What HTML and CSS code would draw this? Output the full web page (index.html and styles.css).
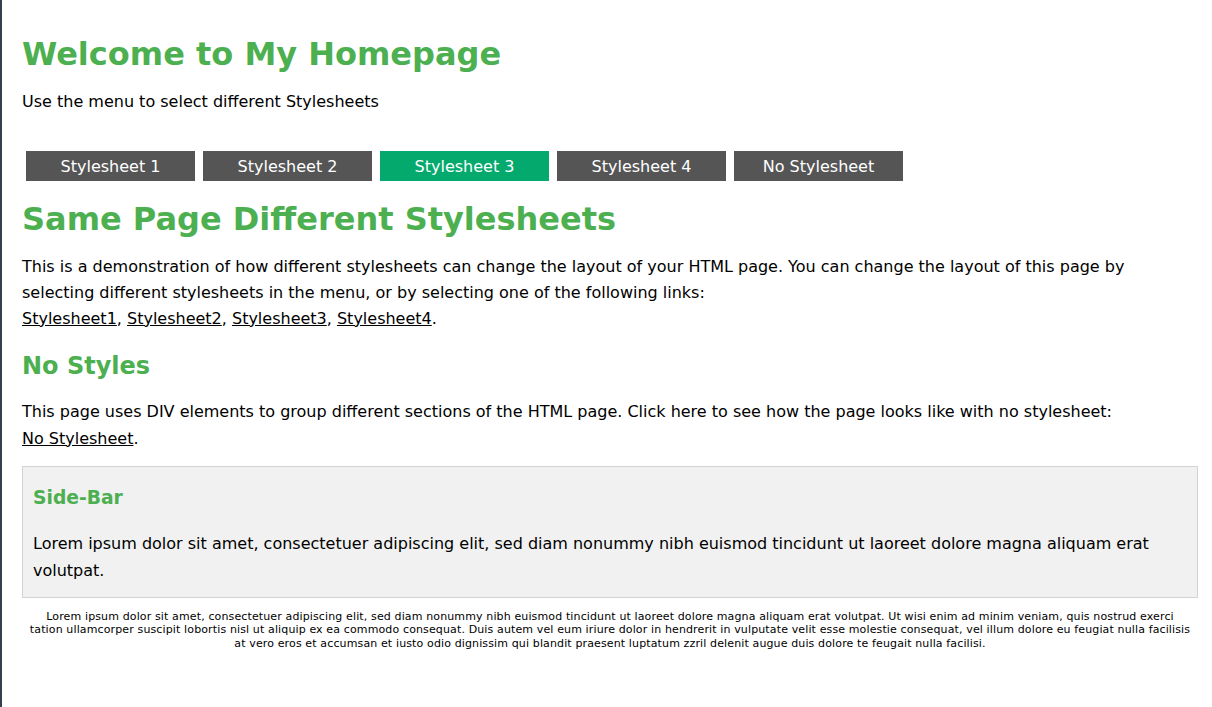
FILE: index.html
```html
<!DOCTYPE html>
<html lang="en">
<head>
<meta charset="utf-8">
<title>My Homepage</title>
<link rel="stylesheet" href="styles.css">
</head>
<body>
<div class="page">
  <div class="intro">
    <h1 class="title">Welcome to My Homepage</h1>
    <p class="lead">Use the menu to select different Stylesheets</p>
  </div>
  <nav class="menu">
    <a class="menu-item" href="#">Stylesheet 1</a>
    <a class="menu-item" href="#">Stylesheet 2</a>
    <a class="menu-item active" href="#">Stylesheet 3</a>
    <a class="menu-item" href="#">Stylesheet 4</a>
    <a class="menu-item" href="#">No Stylesheet</a>
  </nav>
  <div class="content">
    <h2 class="big-heading">Same Page Different Stylesheets</h2>
    <p class="text first">This is a demonstration of how different stylesheets can change the layout of your HTML page. You can change the layout of this page by selecting different stylesheets in the menu, or by selecting one of the following links:<br>
    <a class="link" href="#">Stylesheet1</a>, <a class="link" href="#">Stylesheet2</a>, <a class="link" href="#">Stylesheet3</a>, <a class="link" href="#">Stylesheet4</a>.</p>
    <h2 class="sub-heading">No Styles</h2>
    <p class="text second">This page uses DIV elements to group different sections of the HTML page. Click here to see how the page looks like with no stylesheet:<br>
    <a class="link" href="#">No Stylesheet</a>.</p>
  </div>
  <div class="sidebar">
    <h3 class="side-heading">Side-Bar</h3>
    <p class="side-text">Lorem ipsum dolor sit amet, consectetuer adipiscing elit, sed diam nonummy nibh euismod tincidunt ut laoreet dolore magna aliquam erat volutpat.</p>
  </div>
  <div class="footer">
    <p class="footer-text">Lorem ipsum dolor sit amet, consectetuer adipiscing elit, sed diam nonummy nibh euismod tincidunt ut laoreet dolore magna aliquam erat volutpat. Ut wisi enim ad minim veniam, quis nostrud exerci<br>tation ullamcorper suscipit lobortis nisl ut aliquip ex ea commodo consequat. Duis autem vel eum iriure dolor in hendrerit in vulputate velit esse molestie consequat, vel illum dolore eu feugiat nulla facilisis<br>at vero eros et accumsan et iusto odio dignissim qui blandit praesent luptatum zzril delenit augue duis dolore te feugait nulla facilisi.</p>
  </div>
</div>
</body>
</html>
```

FILE: styles.css
```css
html, body {
  margin: 0;
  padding: 0;
  background: #ffffff;
}

body {
  font-family: "DejaVu Sans", Verdana, sans-serif;
  color: #000000;
  border-left: 2px solid #34404b;
  min-height: 707px;
  box-sizing: border-box;
}

.page {
  padding: 35px 14px 0 20px;
}

.title {
  margin: 0;
  font-size: 32px;
  line-height: 38px;
  font-weight: bold;
  color: #4caf50;
}

.lead {
  margin: 16px 0 0;
  font-size: 16px;
  line-height: 25.6px;
}

.menu {
  display: flex;
  gap: 8px;
  margin: 36px 0 0 4px;
}

.menu-item {
  display: block;
  width: 169px;
  height: 30px;
  line-height: 31px;
  text-align: center;
  background: #555555;
  color: #ffffff;
  text-decoration: none;
  font-size: 16px;
}

.menu-item.active {
  background: #04aa6d;
}

.big-heading {
  margin: 19px 0 0;
  font-size: 32px;
  line-height: 38px;
  font-weight: bold;
  color: #4caf50;
}

.text {
  font-size: 16px;
}

.text.first {
  margin: 16px 0 0;
  line-height: 26px;
}

.text.second {
  margin: 18px 0 0;
  line-height: 27px;
}

.link {
  color: #000000;
  text-decoration: underline;
}

.sub-heading {
  margin: 20px 0 0;
  font-size: 24px;
  line-height: 28px;
  font-weight: bold;
  color: #4caf50;
}

.sidebar {
  margin-top: 14px;
  background: #f1f1f1;
  border: 1px solid #d3d3d3;
  padding: 0 10px;
}

.side-heading {
  margin: 20px 0 0;
  font-size: 18.72px;
  line-height: 22px;
  font-weight: bold;
  color: #4caf50;
}

.side-text {
  margin: 21px 0 13px;
  font-size: 16px;
  line-height: 27px;
}

.footer {
  padding: 12px 0 0;
}

.footer-text {
  margin: 0;
  font-size: 11px;
  line-height: 13.7px;
  letter-spacing: 0.13px;
  text-align: center;
}
```
